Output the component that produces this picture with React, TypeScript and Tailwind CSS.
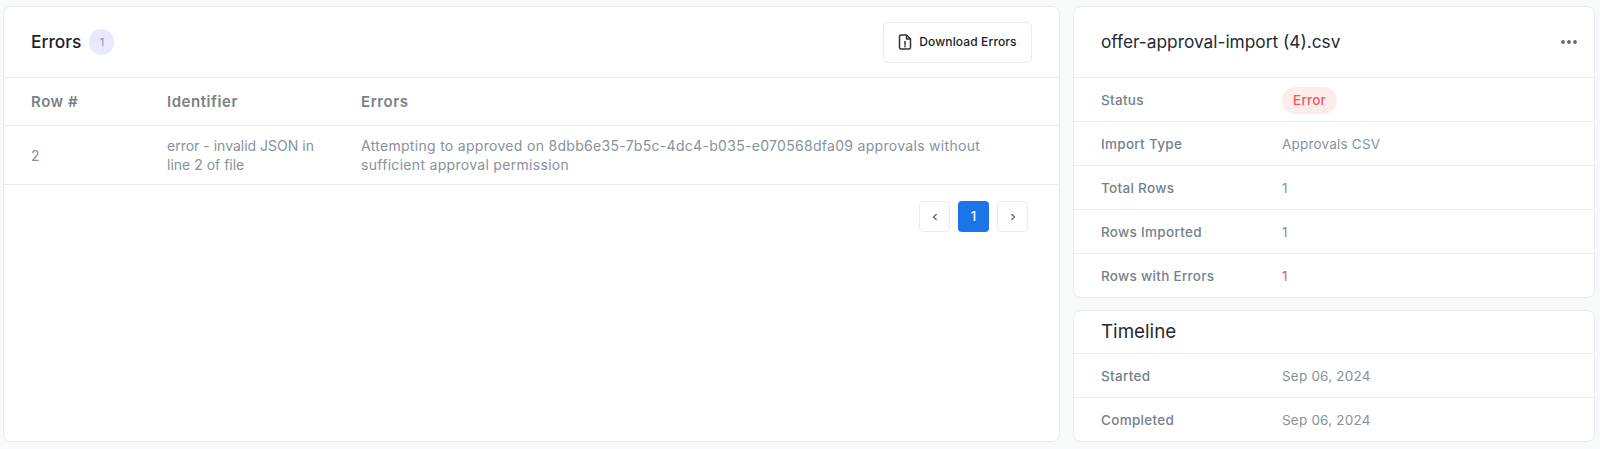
import React from "react";

const font = { fontFamily: '"Inter", "Open Sans", sans-serif' };

function Row({ label, children, last }: { label: string; children: React.ReactNode; last?: boolean }) {
  return (
    <div className={`flex items-center pl-[27px] pt-[1px] text-[13.5px] tracking-[0.2px] ${last ? "h-[43px]" : "h-[44px] border-b border-[#e9ebf0]"}`}>
      <div className="w-[181px] font-medium tracking-[0.3px] text-[#76818b]">{label}</div>
      <div className="text-[#87929b]">{children}</div>
    </div>
  );
}

function Chevron({ d }: { d: string }) {
  return (
    <svg width="10" height="10" viewBox="0 0 10 10" fill="none" stroke="#5f6b78" strokeWidth="1.4" strokeLinecap="round" strokeLinejoin="round">
      <path d={d} />
    </svg>
  );
}

export default function App() {
  return (
    <div style={font} className="flex h-[449px] w-[1600px] items-start gap-[13px] bg-[#f8f9fb] pb-[8px] pl-[3px] pr-[5px] pt-[6px]">
      <div className="h-[436px] w-[1057px] shrink-0 rounded-[8px] border border-[#e9ebf2] bg-white">
        <div className="flex h-[71px] items-center justify-between border-b border-[#e9ebf0] pl-[27px] pr-[27px]">
          <div className="flex items-center gap-[8px]">
            <span className="text-[17.4px] font-medium text-[#1b1f24]">Errors</span>
            <span className="flex h-[26px] w-[25px] items-center justify-center rounded-full bg-[#e8e9fc] text-[11px] text-[#7f86e8]">1</span>
          </div>
          <button className="flex h-[41px] w-[149px] items-center justify-center gap-[7px] rounded-[5px] border border-[#e9ebf0] bg-white text-[12px] font-medium tracking-[0.12px] text-[#1b2028]">
            <svg width="14" height="16" viewBox="0 0 14 16" fill="none" stroke="#2f343a" strokeWidth="1.5" strokeLinejoin="round">
              <path d="M1.5 2.5a1.5 1.5 0 0 1 1.5-1.5h5.5l4 4v8.5a1.5 1.5 0 0 1-1.5 1.5H3a1.5 1.5 0 0 1-1.5-1.5z" />
              <path d="M8.5 1v4h4" />
              <path d="M7 7.5v3M7 12v.8" strokeLinecap="round" />
            </svg>
            Download Errors
          </button>
        </div>
        <div className="flex h-[48px] items-center border-b border-[#e9ebf0] pl-[27px] pt-[1px] text-[15px] font-semibold tracking-[0.55px] text-[#7b7f86]">
          <div className="w-[136px]">Row #</div>
          <div className="w-[194px]">Identifier</div>
          <div>Errors</div>
        </div>
        <div className="flex h-[59px] items-center border-b border-[#e9ebf0] pl-[27px] text-[14px] leading-[19px] tracking-[0.3px] text-[#87929b]">
          <div className="w-[136px]">2</div>
          <div className="w-[194px] pr-[20px] tracking-[0px]">error - invalid JSON in line 2 of file</div>
          <div className="w-[660px]">Attempting to approved on 8dbb6e35-7b5c-4dc4-b035-e070568dfa09 approvals without sufficient approval permission</div>
        </div>
        <div className="flex justify-end gap-[8px] pr-[31px] pt-[16px]">
          <button className="flex h-[31px] w-[31px] items-center justify-center rounded-[4px] border border-[#e9ebf0] bg-white">
            <Chevron d="M6.2 2.5 3.5 5l2.7 2.5" />
          </button>
          <button className="flex h-[31px] w-[31px] items-center justify-center rounded-[4px] bg-[#1b74e8] text-[13px] font-medium text-white">1</button>
          <button className="flex h-[31px] w-[31px] items-center justify-center rounded-[4px] border border-[#e9ebf0] bg-white">
            <Chevron d="M3.8 2.5 6.5 5 3.8 7.5" />
          </button>
        </div>
      </div>

      <div className="flex w-[522px] shrink-0 flex-col gap-[12px]">
        <div className="rounded-[8px] border border-[#e9ebf2] bg-white">
          <div className="flex h-[71px] items-center justify-between border-b border-[#e9ebf0] pl-[27px] pr-[17px]">
            <span className="text-[17.3px] text-[#232a33]">offer-approval-import (4).csv</span>
            <svg width="16" height="4" viewBox="0 0 16 4" fill="#5f6b78">
              <circle cx="2" cy="2" r="1.9" />
              <circle cx="8" cy="2" r="1.9" />
              <circle cx="14" cy="2" r="1.9" />
            </svg>
          </div>
          <Row label="Status">
            <span className="flex h-[27px] w-[55px] items-center justify-center rounded-full bg-[#fdecec] font-medium text-[#f2555f]">Error</span>
          </Row>
          <Row label="Import Type">Approvals CSV</Row>
          <Row label="Total Rows">1</Row>
          <Row label="Rows Imported">1</Row>
          <Row label="Rows with Errors" last>
            <span className="text-[#f2555f]">1</span>
          </Row>
        </div>
        <div className="rounded-[8px] border border-[#e9ebf2] bg-white">
          <div className="flex h-[43px] items-center border-b border-[#e9ebf0] pl-[27px] text-[18.8px] text-[#232a33]">Timeline</div>
          <Row label="Started">Sep 06, 2024</Row>
          <Row label="Completed" last>Sep 06, 2024</Row>
        </div>
      </div>
    </div>
  );
}
